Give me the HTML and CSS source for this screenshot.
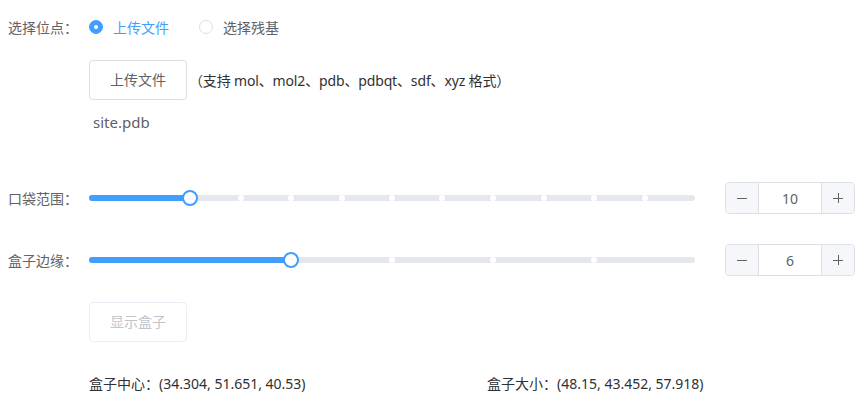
FILE: index.html
```html
<!DOCTYPE html>
<html lang="zh-CN">
<head>
    <meta charset="UTF-8">
    <title>盒子设置</title>
    <link rel="stylesheet" href="styles.css">
</head>
<body>
    <div class="form">
        <div class="row radio-row">
            <span class="label">选择位点：</span>
            <label class="radio is-checked"><span class="radio-dot"></span><span class="radio-text">上传文件</span></label>
            <label class="radio"><span class="radio-dot"></span><span class="radio-text">选择残基</span></label>
        </div>

        <div class="indent upload">
            <button class="btn">上传文件</button>
            <span class="tip">（支持 mol、mol2、pdb、pdbqt、sdf、xyz 格式）</span>
        </div>
        <div class="indent file-name">site.pdb</div>

        <div class="row slider-row first">
            <span class="label">口袋范围：</span>
            <div class="slider">
                <div class="track">
                    <div class="bar" style="width: 16.667%"></div>
                    <span class="stop" style="left: 25%"></span>
                    <span class="stop" style="left: 33.333%"></span>
                    <span class="stop" style="left: 41.667%"></span>
                    <span class="stop" style="left: 50%"></span>
                    <span class="stop" style="left: 58.333%"></span>
                    <span class="stop" style="left: 66.667%"></span>
                    <span class="stop" style="left: 75%"></span>
                    <span class="stop" style="left: 83.333%"></span>
                    <span class="stop" style="left: 91.667%"></span>
                    <span class="thumb" style="left: 16.667%"></span>
                </div>
            </div>
            <div class="number">
                <span class="num-btn minus"><svg width="12" height="12" viewBox="0 0 12 12"><path d="M1 6.5h10" stroke="#606266" stroke-width="1"/></svg></span>
                <span class="num-val">10</span>
                <span class="num-btn plus"><svg width="12" height="12" viewBox="0 0 12 12"><path d="M1 6.5h10M6.5 1v10" stroke="#606266" stroke-width="1"/></svg></span>
            </div>
        </div>

        <div class="row slider-row">
            <span class="label">盒子边缘：</span>
            <div class="slider">
                <div class="track">
                    <div class="bar" style="width: 33.333%"></div>
                    <span class="stop" style="left: 50%"></span>
                    <span class="stop" style="left: 66.667%"></span>
                    <span class="stop" style="left: 83.333%"></span>
                    <span class="thumb" style="left: 33.333%"></span>
                </div>
            </div>
            <div class="number">
                <span class="num-btn minus"><svg width="12" height="12" viewBox="0 0 12 12"><path d="M1 6.5h10" stroke="#606266" stroke-width="1"/></svg></span>
                <span class="num-val">6</span>
                <span class="num-btn plus"><svg width="12" height="12" viewBox="0 0 12 12"><path d="M1 6.5h10M6.5 1v10" stroke="#606266" stroke-width="1"/></svg></span>
            </div>
        </div>

        <div class="indent show-box">
            <button class="btn is-disabled">显示盒子</button>
        </div>

        <div class="indent result">
            <span class="result-col">盒子中心：(34.304, 51.651, 40.53)</span>
            <span class="result-col">盒子大小：(48.15, 43.452, 57.918)</span>
        </div>
    </div>
</body>
</html>
```

FILE: styles.css
```css
body {
    margin: 8px;
    background: #fff;
    font-family: "Noto Sans", "Noto Sans CJK SC", sans-serif;
    font-size: 14px;
    color: #606266;
}
.form {
    width: 847px;
}
.row {
    display: flex;
    align-items: center;
}
.label {
    width: 81px;
    flex-shrink: 0;
    color: #606266;
}
.indent {
    margin-left: 81px;
}

/* radio */
.radio-row {
    height: 38px;
}
.radio {
    display: flex;
    align-items: center;
    margin-right: 30px;
    cursor: pointer;
}
.radio-dot {
    width: 14px;
    height: 14px;
    box-sizing: border-box;
    border: 1px solid #dcdfe6;
    border-radius: 50%;
    background: #fff;
}
.radio-text {
    padding-left: 10px;
    color: #606266;
}
.is-checked .radio-dot {
    border-color: #409eff;
    background: #409eff;
    position: relative;
}
.is-checked .radio-dot::after {
    content: "";
    position: absolute;
    left: 50%;
    top: 50%;
    width: 4px;
    height: 4px;
    margin: -2px 0 0 -2px;
    border-radius: 50%;
    background: #fff;
}
.is-checked .radio-text {
    color: #409eff;
}

/* buttons */
.btn {
    font-family: inherit;
    font-size: 14px;
    line-height: 1;
    padding: 12px 20px;
    width: 98px;
    height: 40px;
    border: 1px solid #dcdfe6;
    border-radius: 4px;
    background: #fff;
    color: #606266;
    cursor: pointer;
}
.btn.is-disabled {
    color: #c0c4cc;
    border-color: #ebeef5;
    cursor: not-allowed;
}
.upload {
    display: flex;
    align-items: center;
    margin-top: 14px;
}
.tip {
    margin-left: 2px;
    color: #303133;
    font-size: 14px;
    letter-spacing: -0.15px;
}
.file-name {
    margin-top: 12px;
    padding-left: 4px;
    line-height: 20px;
    font-size: 15px;
}

/* slider */
.slider-row {
    height: 32px;
    margin-top: 30px;
}
.slider-row.first {
    margin-top: 50px;
}
.slider {
    flex: 1;
    margin-right: 30px;
}
.track {
    position: relative;
    height: 6px;
    border-radius: 3px;
    background: #e4e7ed;
}
.bar {
    height: 6px;
    border-radius: 3px;
    background: #409eff;
}
.stop {
    position: absolute;
    top: 0;
    width: 6px;
    height: 6px;
    margin-left: -3px;
    border-radius: 50%;
    background: #fff;
}
.thumb {
    position: absolute;
    top: 50%;
    width: 16px;
    height: 16px;
    margin: -8px 0 0 -8px;
    box-sizing: border-box;
    border: 2px solid #409eff;
    border-radius: 50%;
    background: #fff;
}

/* number input */
.number {
    display: flex;
    width: 130px;
    height: 32px;
    box-sizing: border-box;
    border: 1px solid #dcdfe6;
    border-radius: 4px;
    overflow: hidden;
}
.num-btn {
    width: 32px;
    display: flex;
    align-items: center;
    justify-content: center;
    background: #f5f7fa;
}
.minus {
    border-right: 1px solid #dcdfe6;
}
.plus {
    border-left: 1px solid #dcdfe6;
}
.num-val {
    flex: 1;
    display: flex;
    align-items: center;
    justify-content: center;
    color: #606266;
}

.show-box {
    margin-top: 26px;
}
.result {
    display: flex;
    margin-top: 32px;
    line-height: 20px;
    color: #303133;
}
.result-col {
    flex-shrink: 0;
}
.result-col:first-child {
    width: 398px;
}
```
